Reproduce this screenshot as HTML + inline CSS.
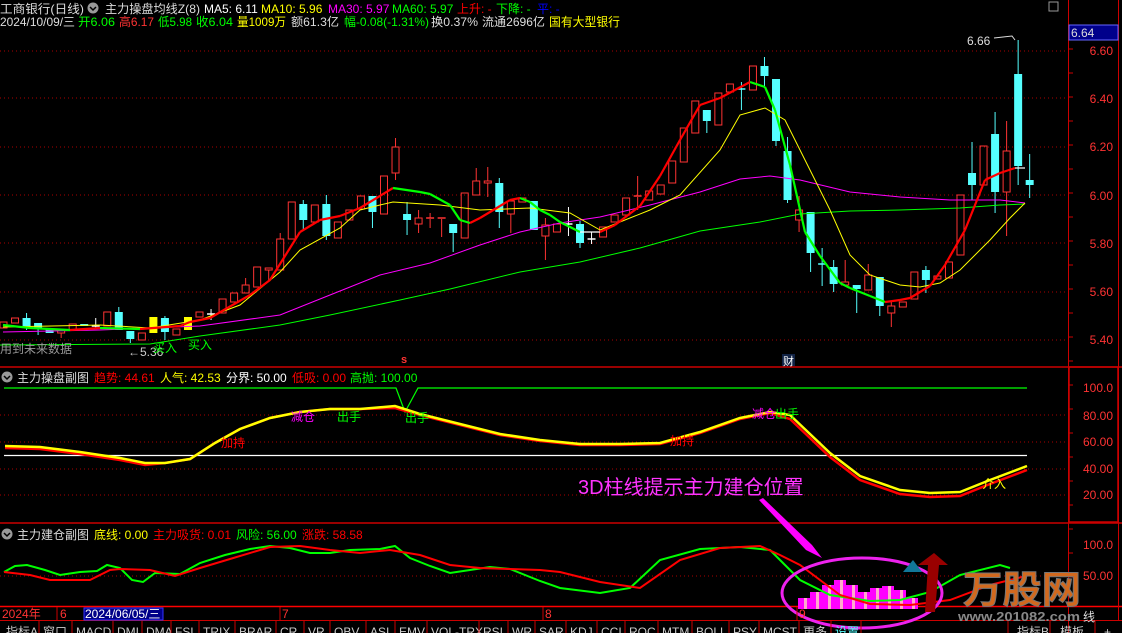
<!DOCTYPE html><html><head><meta charset="utf-8"><style>
body{margin:0;background:#000;width:1122px;height:633px;overflow:hidden;font-family:"Liberation Sans","Noto Sans CJK SC",sans-serif}
svg{position:absolute;left:0;top:0}
text{font-family:"Liberation Sans","Noto Sans CJK SC",sans-serif}
</style></head><body>
<svg id="s" width="1122" height="633" xmlns="http://www.w3.org/2000/svg"></svg>
<script>
const S=document.getElementById('s');let h='';
function pl(pts,c,w,extra){return `<polyline points="${pts.map(p=>p.join(',')).join(' ')}" fill="none" stroke="${c}" stroke-width="${w}" ${extra||''}/>`;}
function tx(x,y,t,c,sz,extra){return `<text x="${x}" y="${y}" fill="${c}" font-size="${sz||12}" ${extra||''}>${t}</text>`;}
function ts(x,t,c,w){return `<tspan x="${x}" fill="${c}"${w?` textLength="${w}" lengthAdjust="spacingAndGlyphs"`:''}>${t}</tspan>`;}
[51,98,147,195,243,292,340].forEach(y=>h+=`<line x1="0" y1="${y}" x2="1068" y2="${y}" stroke="#a00" stroke-dasharray="1,3"/>`);
[415,442,469,495].forEach(y=>h+=`<line x1="0" y1="${y}" x2="1068" y2="${y}" stroke="#a00" stroke-dasharray="1,3"/>`);
h+=`<line x1="0" y1="576" x2="1068" y2="576" stroke="#a00" stroke-dasharray="1,3"/>`;
h+=`<line x1="0" y1="367" x2="1122" y2="367" stroke="#c00" stroke-width="1.5"/>`;
h+=`<line x1="0" y1="523" x2="1122" y2="523" stroke="#c00" stroke-width="1.5"/>`;
h+=`<line x1="0" y1="606.5" x2="1122" y2="606.5" stroke="#f00" stroke-width="1.5"/>`;
h+=`<line x1="0" y1="620.5" x2="1122" y2="620.5" stroke="#c00"/>`;
h+=`<line x1="1068.5" y1="0" x2="1068.5" y2="633" stroke="#c00"/>`;
h+=`<line x1="1118.5" y1="0" x2="1118.5" y2="620" stroke="#c00"/>`;
h+=`<rect x="1069" y="367" width="49" height="155" fill="none" stroke="#c00" stroke-width="1.5"/>`;
[[6.60,55],[6.40,103],[6.20,151],[6.00,200],[5.80,248],[5.60,296],[5.40,344]].forEach(a=>h+=tx(1113,a[1],a[0].toFixed(2),'#f33',12,'text-anchor="end"'));
[['100.0',392],['80.00',420],['60.00',446],['40.00',473],['20.00',499]].forEach(a=>h+=tx(1113,a[1],a[0],'#f33',12,'text-anchor="end"'));
[['100.0',549],['50.00',580]].forEach(a=>h+=tx(1113,a[1],a[0],'#f33',12,'text-anchor="end"'));
for(let y=25;y<600;y+=24)h+=`<line x1="1068" y1="${y}" x2="1073" y2="${y}" stroke="#c00"/>`;
h+=`<rect x="1069" y="25" width="49" height="15" fill="#00008b" stroke="#66f"/>`+tx(1071,37,'6.64','#ddd',12);
const C=[[322,328,0,0,'r'],[318,323,0,0,'r'],[318,327,313,330,'c'],[323,328,0,335,'c'],[329,333,0,0,'c'],[330,333,0,338,'r'],[324,330,0,0,'r'],[324,326,0,0,'c'],[326,326,318,328,'w'],[312,326,0,0,'r'],[312,330,307,0,'c'],[331,339,0,343,'c'],[333,340,0,0,'r'],[317,333,0,0,'y'],[318,332,316,340,'c'],[329,335,0,0,'r'],[317,330,0,0,'y'],[312,317,0,0,'r'],[314,314,309,320,'w'],[299,313,0,0,'r'],[293,302,0,0,'r'],[285,293,278,0,'r'],[267,287,0,0,'r'],[268,270,0,280,'r'],[239,270,233,0,'r'],[202,239,0,0,'r'],[204,220,200,230,'c'],[205,222,0,0,'r'],[204,236,195,240,'c'],[222,238,0,0,'r'],[210,220,0,0,'r'],[196,209,0,0,'r'],[196,212,0,228,'c'],[176,214,0,0,'r'],[147,173,138,180,'r'],[214,220,202,235,'c'],[218,224,210,233,'r'],[218,219,213,228,'r'],[218,219,0,237,'r'],[224,233,0,252,'c'],[193,238,0,0,'r'],[181,195,168,0,'r'],[181,183,167,197,'r'],[183,212,178,228,'c'],[201,214,0,233,'r'],[198,202,0,0,'r'],[201,230,0,0,'c'],
[225,236,218,260,'r'],[224,232,0,0,'r'],[224,224,207,236,'w'],[224,243,221,248,'c'],[239,239,232,244,'w'],[227,237,0,0,'r'],[215,222,0,0,'r'],[198,215,0,0,'r'],[196,197,176,210,'r'],[191,200,0,0,'r'],[185,194,0,0,'r'],[161,183,0,0,'r'],[128,162,0,0,'r'],[101,133,0,0,'r'],[110,121,0,133,'c'],[93,125,0,0,'r'],[84,92,0,0,'r'],[89,89,82,110,'c'],[66,90,0,0,'r'],[66,76,57,88,'c'],[79,141,0,146,'c'],[151,200,137,203,'c'],[210,220,196,232,'r'],[212,253,0,272,'c'],[264,264,248,286,'c'],[267,284,260,292,'c'],[282,285,260,0,'r'],[285,289,0,313,'c'],[275,290,264,0,'r'],[277,306,0,316,'c'],[306,313,302,327,'r'],[302,307,0,0,'r'],[272,299,0,0,'r'],[270,280,266,293,'c'],[276,279,0,0,'r'],[262,278,0,0,'r'],[195,255,0,0,'r'],[173,185,142,200,'c'],[146,185,0,0,'r'],[134,192,112,213,'c'],[151,192,121,236,'r'],[74,166,40,185,'c'],[180,185,154,198,'c']];
C.forEach((c,i)=>{const x=3.5+i*11.53;let [t,b,wt,wb,k]=c;const col=k=='r'?'#f33':k=='c'?'#5ff':k=='y'?'#ff0':'#fff';
 if(wt)h+=`<line x1="${x}" y1="${wt}" x2="${x}" y2="${t}" stroke="${col}"/>`;
 if(wb)h+=`<line x1="${x}" y1="${b}" x2="${x}" y2="${wb}" stroke="${col}"/>`;
 if(b-t<1.5)h+=`<line x1="${x-4}" y1="${t}" x2="${x+4}" y2="${t}" stroke="${col}" stroke-width="1.5"/>`;
 else if(k=='r')h+=`<rect x="${x-3.5}" y="${t}" width="7" height="${b-t}" fill="none" stroke="${col}"/>`;
 else h+=`<rect x="${x-4}" y="${t}" width="8" height="${b-t}" fill="${col}"/>`;});
h+=pl([[0,345],[150,344],[200,336],[280,325],[330,315],[400,300],[450,289],[520,272],[580,262],[640,248],[700,231],[760,222],[800,214],[850,211],[900,210],[960,208],[1000,205],[1025,204]],'#0f0',1);
h+=pl([[3,332],[100,330],[200,326],[280,315],[330,295],[380,275],[430,263],[480,245],[520,232],[560,223],[600,217],[650,205],[700,192],[740,179],[770,176],[800,180],[850,192],[900,197],[950,200],[1000,200],[1025,203]],'#f0f',1);
h+=pl([[3,327],[100,325],[150,328],[200,320],[240,305],[280,272],[300,250],[340,228],[360,210],[380,205],[393,202],[440,205],[480,210],[530,208],[570,213],[600,230],[620,222],[650,210],[680,195],[720,150],[740,115],[765,108],[785,120],[800,150],[830,210],[850,255],[870,275],[900,285],[920,287],[940,283],[960,270],[990,240],[1010,218],[1025,203]],'#ff0',1);
const M5=[[3,325],[30,328],[70,330],[100,328],[140,329],[180,326],[190,322],[210,318],[250,295],[270,280],[300,232],[320,220],[340,216],[360,208],[393,188],[420,192],[430,194],[450,205],[460,220],[470,223],[480,218],[500,206],[510,200],[520,198],[530,202],[540,210],[550,215],[560,222],[580,232],[600,232],[615,225],[640,206],[660,176],[680,140],[700,105],[720,98],[735,90],[750,82],[765,87],[775,110],[790,165],[805,232],[820,256],[840,283],[850,288],[870,296],[885,302],[900,300],[910,298],[930,286],[945,265],[965,230],[985,180],[1000,173],[1015,168],[1025,168]];
for(let i=1;i<M5.length;i++){const a=M5[i-1],b=M5[i];const d=b[1]-a[1];const c=d<-0.5?'#f00':d>0.5?'#0f0':'#fff';h+=pl([a,b],c,d<-0.5||d>0.5?2.2:1.2);}
h+=tx(0,353,'用到未来数据','#999',12)+tx(128,356,'←5.36','#ccc',12)+tx(153,352,'买入','#0f0',12)+tx(188,349,'买入','#0f0',12);
h+=tx(401,363,'s','#f33',11,'font-weight="bold"');
h+=`<rect x="782" y="354" width="13" height="12" fill="#124"/>`+tx(783,365,'财','#fff',11);
h+=tx(967,45,'6.66','#ddd',12)+`<polyline points="994,38 1012,36 1015,40" fill="none" stroke="#ddd"/>`;
h+=`<circle cx="93" cy="8" r="5.5" fill="#999"/><path d="M90,7 l3,3 l3,-3" stroke="#000" stroke-width="1.5" fill="none"/>`;
h+=`<text y="13" font-size="12">${ts(0,'工商银行(日线)','#ddd',84)}${ts(105,'主力操盘均线Z(8)','#ddd',95)}${ts(204,'MA5: 6.11','#fff')}${ts(261,'MA10: 5.96','#ff0')}${ts(328,'MA30: 5.97','#f0f')}${ts(392,'MA60: 5.97','#0f0')}${ts(457,'上升: -','#f00')}${ts(496,'下降: -','#0f0')}${ts(537,'平: -','#00f')}</text>`;
h+=`<text y="26" font-size="12">${ts(0,'2024/10/09/三','#ddd',75)}${ts(78,'开6.06','#0f0',37)}${ts(119,'高6.17','#f33',35)}${ts(158,'低5.98','#0f0',34)}${ts(196,'收6.04','#0f0',37)}${ts(237,'量1009万','#ff0',49)}${ts(291,'额61.3亿','#ddd',48)}${ts(344,'幅-0.08(-1.31%)','#0f0',85)}${ts(431,'换0.37%','#ddd',47)}${ts(482,'流通2696亿','#ddd',63)}${ts(549,'国有大型银行','#ff0',71)}</text>`;
h+=`<rect x="1049" y="2" width="9" height="9" fill="none" stroke="#999"/>`;
h+=`<circle cx="7" cy="377" r="5.5" fill="#999"/><path d="M4,376 l3,3 l3,-3" stroke="#000" stroke-width="1.5" fill="none"/>`;
h+=`<text y="382" font-size="12"><tspan x="17" fill="#ddd">主力操盘副图</tspan><tspan x="94" fill="#f00">趋势: 44.61</tspan><tspan x="160" fill="#ff0">人气: 42.53</tspan><tspan x="226" fill="#fff">分界: 50.00</tspan><tspan x="292" fill="#f00">低吸: 0.00</tspan><tspan x="350" fill="#0f0">高抛: 100.00</tspan></text>`;
h+=pl([[4,388],[396,388],[405,412],[418,388],[1027,388]],'#0f0',1.2);
h+=`<line x1="4" y1="455.5" x2="1027" y2="455.5" stroke="#fff" stroke-width="1.2"/>`;
const Y1=[[5,446],[40,447],[80,452],[120,458],[145,463],[165,461],[190,457],[215,441],[240,427],[270,416],[300,410],[330,407],[360,407],[395,406],[420,414],[460,424],[500,434],[540,440],[580,444],[620,444],[660,443],[700,432],[740,418],[770,412],[790,415],[830,453],[860,476],[900,490],[930,493],[960,492],[990,480],[1027,466]];
h+=pl(Y1.map(p=>[p[0],p[1]+(p[0]>395&&p[0]<780?1:(p[0]>=780?4:2))]),'#f00',2.5);
h+=pl(Y1.map(p=>[p[0],p[1]+(p[0]>150&&p[0]<395?2:0)]),'#ff0',2.5);
h+=tx(291,421,'减仓','#f0f',12)+tx(337,421,'出手','#0f0',12)+tx(405,422,'出手','#0f0',12)+tx(221,447,'加持','#f00',12)+tx(670,445,'加持','#f00',12)+tx(752,418,'减仓','#f0f',12)+tx(775,418,'出手','#0f0',12)+tx(982,488,'介入','#ff0',12);
h+=tx(578,494,'3D柱线提示主力建仓位置','#f3f',20);
h+=`<polygon points="759,500 763,498 812,545 822,558 806,550" fill="#f0f"/>`;
h+=`<circle cx="7" cy="534" r="5.5" fill="#999"/><path d="M4,533 l3,3 l3,-3" stroke="#000" stroke-width="1.5" fill="none"/>`;
h+=`<text y="539" font-size="12"><tspan x="17" fill="#ddd">主力建仓副图</tspan><tspan x="94" fill="#ff0">底线: 0.00</tspan><tspan x="153" fill="#f00">主力吸货: 0.01</tspan><tspan x="236" fill="#0f0">风险: 56.00</tspan><tspan x="302" fill="#f00">涨跌: 58.58</tspan></text>`;
[[800,598],[812,592],[824,585],[836,580],[848,585],[860,592],[872,588],[884,586],[896,590],[908,598]].forEach(b=>{h+=`<rect x="${b[0]-2}" y="${b[1]}" width="12" height="${609-b[1]}" fill="#f0f"/><rect x="${b[0]+4}" y="${b[1]}" width="3" height="${609-b[1]}" fill="#fac"/>`;});
h+=pl([[4,572],[15,566],[27,565],[45,570],[60,575],[80,572],[97,571],[107,565],[120,568],[132,580],[143,582],[155,573],[180,574],[200,563],[225,555],[250,549],[270,546],[290,548],[310,553],[330,553],[350,550],[380,549],[395,546],[410,558],[430,566],[450,573],[470,570],[490,567],[510,569],[540,581],[560,588],[600,593],[630,588],[660,560],[700,549],[740,547],[770,550],[785,565],[800,580],[830,595],[870,601],[900,600],[930,592],[960,575],[1000,565],[1010,568]],'#0f0',2);
h+=pl([[4,572],[30,575],[50,580],[90,580],[110,570],[120,569],[150,570],[175,576],[200,568],[230,559],[270,547],[300,546],[330,550],[360,553],[390,550],[420,555],[450,565],[480,568],[510,569],[540,570],[560,572],[600,582],[640,588],[680,560],[720,548],[760,546],[780,555],[800,565],[820,580],[840,595],[870,604],[910,605],[950,600],[990,585],[1030,575]],'#f00',2);
h+=`<ellipse cx="862" cy="593" rx="80" ry="35" fill="none" stroke="#e2e" stroke-width="3"/>`;
h+=`<polygon points="925,612 928,565 918,565 934,553 948,565 939,565 935,612" fill="#900"/><polygon points="903,572 913,560 922,572" fill="#179"/>`;
h+=tx(963,603,'万股网','#d2691e',38,'font-weight="bold" stroke="#777" stroke-width="1" textLength="118" lengthAdjust="spacingAndGlyphs"');
h+=tx(958,621,'www.201082.com','#888',13,'font-weight="bold" textLength="122" lengthAdjust="spacingAndGlyphs"')+tx(1083,621,'线','#ddd',12);
h+=tx(2,618,'2024年','#f33',12)+tx(60,618,'6','#f33',12)+`<line x1="57" y1="607" x2="57" y2="620" stroke="#c00"/>`;
h+=`<rect x="84" y="608" width="79" height="12" fill="#008" stroke="#33f"/>`+tx(85,618,'2024/06/05/三','#fff',12);
h+=`<line x1="280" y1="607" x2="280" y2="620" stroke="#c00"/>`+tx(282,618,'7','#f33',12)+`<line x1="543" y1="607" x2="543" y2="620" stroke="#c00"/>`+tx(545,618,'8','#f33',12)+`<line x1="797" y1="607" x2="797" y2="620" stroke="#c00"/>`+tx(799,618,'9','#f33',12);
const T=['指标A','窗口','MACD','DMI','DMA','FSL','TRIX','BRAR','CR','VR','OBV','ASI','EMV','VOL-TRX','RSI','WR','SAR','KDJ','CCI','ROC','MTM','BOLL','PSY','MCST','更多','设置'];
const W=[37,33,41,29,29,28,36,41,28,26,36,29,32,52,29,27,31,31,28,33,34,37,30,40,32,30];
let x=2;T.forEach((t,i)=>{h+=tx(x+4,636,t,i==25?'#5ff':'#ccc',12)+`<line x1="${x+W[i]}" y1="621" x2="${x+W[i]}" y2="633" stroke="#c00"/>`;x+=W[i];});
h+=`<line x1="1008" y1="621" x2="1008" y2="633" stroke="#c00"/>`+tx(1017,636,'指标B','#ccc',12)+`<line x1="1050" y1="621" x2="1050" y2="633" stroke="#c00"/>`+tx(1060,636,'模板','#ccc',12)+`<line x1="1095" y1="621" x2="1095" y2="633" stroke="#c00"/>`+tx(1104,636,'+','#ccc',12);
S.innerHTML=h;
</script></body></html>
